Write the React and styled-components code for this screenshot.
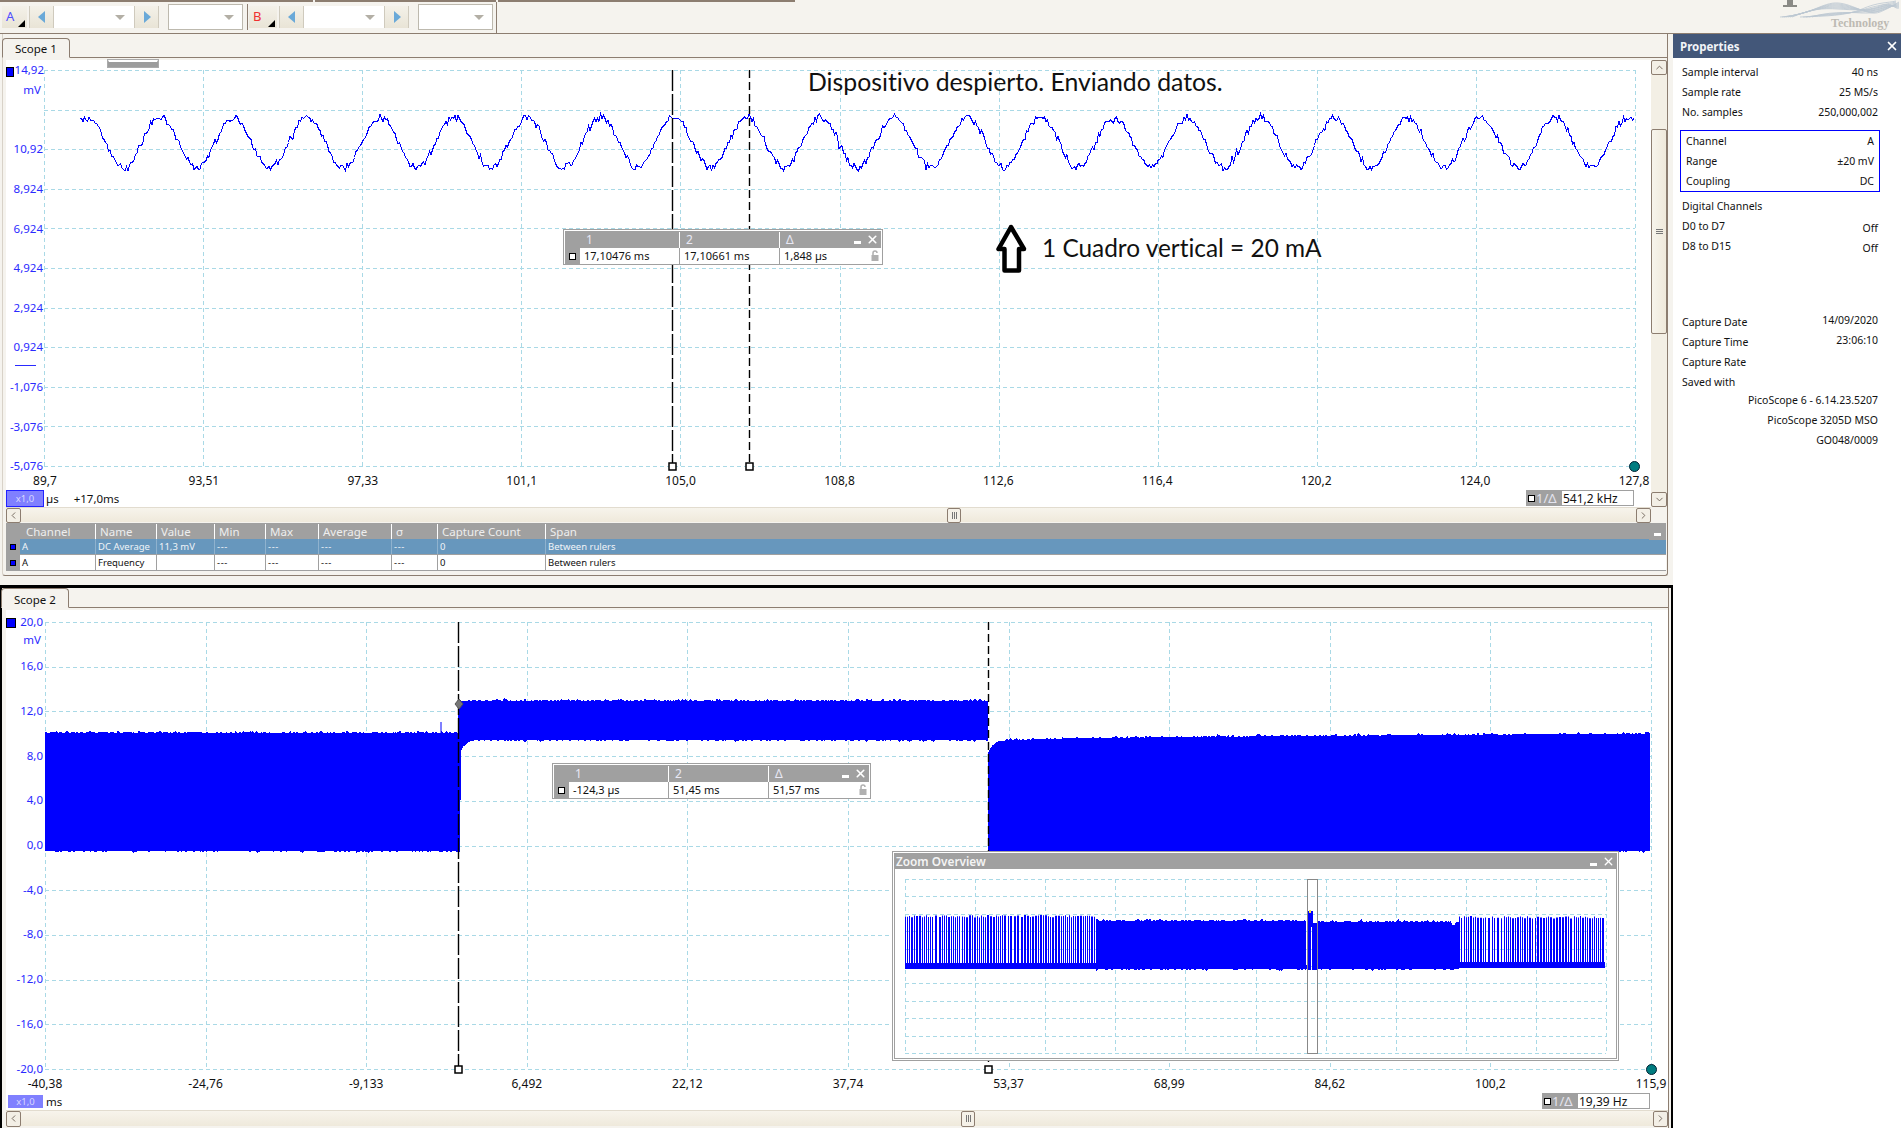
import React from "react";
import styled, { createGlobalStyle } from "styled-components";
import { ChevronUp, ChevronDown, ChevronLeft, ChevronRight, X } from "lucide-react";

const GlobalStyle = createGlobalStyle`
  html, body {
    margin: 0;
    padding: 0;
    background: #f5f3ee;
  }
  * {
    box-sizing: border-box;
  }
`;

const UI_FONT = `"Noto Sans", "Open Sans", sans-serif`;
const BROWN = "#8c7d70";
const GRID = "#a9d9e6";
const BLUE = "#0000ff";

const Page = styled.div`
  position: relative;
  width: 1901px;
  height: 1128px;
  overflow: hidden;
  font-family: ${UI_FONT};
  color: #111;
  background: #f5f3ee;
`;

/* ---------- toolbar ---------- */
const TopStrip = styled.div`
  display: flex;
  gap: 2px;
  height: 2px;
`;
const TopSegment = styled.div`
  width: ${(p) => p.$w}px;
  height: 2px;
  background: ${BROWN};
`;
const Toolbar = styled.div`
  display: flex;
  height: 32px;
  border-bottom: 1px solid ${BROWN};
`;
const ToolGroup = styled.div`
  display: flex;
  align-items: center;
  width: 497px;
  height: 31px;
  padding: 1px 0 2px 2px;
  border-right: 1px solid ${BROWN};
`;
const ChannelButton = styled.div`
  position: relative;
  width: ${(p) => p.$w}px;
  height: 22px;
  padding-left: 4px;
  font-size: 13px;
  line-height: 20px;
  color: ${(p) => p.$color};
  background: linear-gradient(#f4f1e9, #e9e4d6);
`;
const Corner = styled.span`
  position: absolute;
  right: 2px;
  bottom: 1px;
  width: 0;
  height: 0;
  border-left: 7px solid transparent;
  border-bottom: 7px solid #000;
`;
const StepButton = styled.div`
  display: flex;
  align-items: center;
  justify-content: center;
  width: 25px;
  height: 22px;
  margin-left: ${(p) => p.$ml || 0}px;
  background: linear-gradient(#f4f1e9, #e9e4d6);
  border-left: 1px solid #cfcabd;
  border-right: 1px solid #cfcabd;
`;
const Field = styled.div`
  display: flex;
  align-items: center;
  justify-content: flex-end;
  width: 80px;
  height: 22px;
  padding-right: 9px;
  background: #fff;
`;
const SelectBox = styled.div`
  display: flex;
  align-items: center;
  justify-content: flex-end;
  width: 75px;
  height: 26px;
  margin-left: 9px;
  padding-right: 8px;
  background: #fff;
  border: 1px solid #bdb9ae;
`;
const DropArrow = styled.span`
  width: 0;
  height: 0;
  border-left: 5px solid transparent;
  border-right: 5px solid transparent;
  border-top: 5px solid #b3afa5;
`;
const ToolDivider = styled.div`
  width: 1px;
  height: 26px;
  margin: 0 1px 0 4px;
  background: ${BROWN};
`;
const LogoMark = styled.svg`
  position: absolute;
  top: 0;
  right: 0;
`;
const LogoText = styled.text`
  font-family: "Liberation Serif", serif;
  font-weight: 700;
  font-size: 12px;
  fill: #bdbab3;
`;

/* ---------- main columns ---------- */
const Columns = styled.div`
  display: flex;
  height: 1094px;
`;
const LeftColumn = styled.div`
  width: 1673px;
`;

const ScopePane = styled.div`
  width: 1666px;
  height: 542px;
  margin-left: 2px;
  border-right: 1px solid ${BROWN};
  border-bottom: 1px solid ${BROWN};
  border-left: 1px solid #d8d2c8;
  border-radius: 0 0 3px 3px;
`;
const SecondFrame = styled.div`
  height: 543px;
  margin-top: 9px;
  border-top: 3px solid #000;
  border-left: 2px solid #000;
  border-right: 2px solid #000;
`;
const SecondPane = styled.div`
  width: 1667px;
  height: 540px;
  border-right: 1px solid ${BROWN};
`;
const TabStrip = styled.div`
  display: flex;
  align-items: flex-end;
  height: ${(p) => p.$h}px;
  margin-left: -1px;
  border-bottom: 1px solid ${BROWN};
`;
const Tab = styled.div`
  width: 68px;
  height: 20px;
  margin-bottom: -1px;
  padding-left: 12px;
  font-size: 11.5px;
  line-height: ${(p) => p.$lh}px;
  background: #f5f3ee;
  border: 1px solid ${BROWN};
  border-bottom: 1px solid #f5f3ee;
  border-radius: 4px 4px 0 0;
`;
const PlotRow = styled.div`
  display: flex;
  padding: 2px 0 0 ${(p) => p.$pl}px;
`;
const PlotColumn = styled.div`
  width: ${(p) => p.$w}px;
  background: #fff;
`;
const Plot = styled.div`
  position: relative;
  width: ${(p) => p.$w}px;
  height: ${(p) => p.$h}px;
  background: #fff;
`;
const Chart = styled.svg`
  display: block;
`;
const YLabel = styled.text`
  font-family: ${UI_FONT};
  font-size: 11.5px;
  fill: #2a2aff;
  text-anchor: end;
  dominant-baseline: central;
`;
const XLabel = styled.text`
  font-family: ${UI_FONT};
  font-size: 12px;
  fill: #111;
  text-anchor: middle;
  dominant-baseline: central;
`;
const GridLine = styled.path`
  stroke: ${GRID};
  stroke-width: 1;
  stroke-dasharray: 4 3;
  shape-rendering: crispEdges;
  fill: none;
`;
const Note = styled.div`
  position: absolute;
  left: ${(p) => p.$left}px;
  top: ${(p) => p.$top}px;
  font-family: "Lato", "Open Sans", sans-serif;
  font-size: ${(p) => p.$size}px;
  font-variant-ligatures: none;
  line-height: 30px;
  white-space: nowrap;
  color: #111;
`;
const DragHandle = styled.div`
  position: absolute;
  left: 102px;
  top: 0;
  width: 50px;
  height: 7px;
  background: #9c9c9c;
  border: 1px solid #9c9c9c;
  border-top: 2px solid #fff;
  outline: 1px solid #aaa;
`;

/* ---------- floating ruler legend ---------- */
const RulerBox = styled.div`
  position: absolute;
  left: ${(p) => p.$left}px;
  top: ${(p) => p.$top}px;
  width: ${(p) => p.$w}px;
  padding: 1px;
  background: #fff;
  border: 1px solid #a0a0a0;
`;
const RulerHead = styled.div`
  display: grid;
  grid-template-columns: ${(p) => p.$cols};
  height: 17px;
  background: #a0a0a0;
  color: #e8e8f4;
  font-size: 12px;
  line-height: 17px;
`;
const RulerHeadCell = styled.div`
  position: relative;
  padding-left: ${(p) => p.$pad ?? 6}px;
  border-left: ${(p) => (p.$first ? "none" : "1px solid #fff")};
  margin: 1px 0;
  line-height: 16px;
`;
const RulerRow = styled.div`
  display: grid;
  grid-template-columns: ${(p) => p.$cols};
  height: 15px;
  background: #fff;
  font-size: 11px;
  line-height: 16px;
`;
const RulerCell = styled.div`
  position: relative;
  padding-left: 4px;
  white-space: nowrap;
  border-left: ${(p) => (p.$first ? "none" : "1px solid #a0a0a0")};
`;
const RulerSide = styled.div`
  display: flex;
  align-items: center;
  justify-content: center;
  background: #a0a0a0;
`;
const SmallSquare = styled.span`
  flex: none;
  width: 7px;
  height: 7px;
  background: #fff;
  border: 1px solid #000;
`;
const WindowButtons = styled.div`
  position: absolute;
  right: ${(p) => p.$right ?? 2}px;
  top: ${(p) => p.$top ?? 0}px;
  display: flex;
  align-items: center;
  gap: 5px;
  height: 14px;
`;
const MinBar = styled.span`
  width: 7px;
  height: 3px;
  margin-top: 7px;
  background: #fff;
`;
const LockIcon = styled.svg`
  position: absolute;
  right: 2px;
  top: 2px;
`;

/* ---------- readout under a plot ---------- */
const Readout = styled.div`
  display: flex;
  align-items: center;
  justify-content: space-between;
  height: 18px;
  padding: 0 ${(p) => p.$pr}px 0 ${(p) => p.$pl}px;
  background: #fff;
`;
const ReadoutLeft = styled.div`
  display: flex;
  align-items: center;
  font-size: 11.5px;
`;
const ScaleChip = styled.div`
  width: ${(p) => p.$w}px;
  height: ${(p) => p.$h}px;
  text-align: center;
  font-size: 9.5px;
  line-height: ${(p) => p.$h - (p.$framed ? 2 : 0)}px;
  color: #d8d8ff;
  background: #8080ff;
  border: ${(p) => (p.$framed ? "1px solid #2222ff" : "none")};
`;
const Unit = styled.span`
  margin-left: ${(p) => p.$ml}px;
`;
const Freq = styled.div`
  display: flex;
  width: 108px;
  height: 16px;
`;
const FreqTag = styled.div`
  display: flex;
  align-items: center;
  gap: 1px;
  width: 35px;
  padding-left: 2px;
  font-size: 13px;
  color: #e4e4ee;
  background: #a0a0a0;
`;
const FreqValue = styled.div`
  flex: 1;
  padding-left: 1px;
  font-size: 12px;
  line-height: 15px;
  background: #fff;
  border: 1px solid #a0a0a0;
`;

/* ---------- scroll bars ---------- */
const VBar = styled.div`
  display: flex;
  flex-direction: column;
  width: 16px;
  height: 447px;
  background: #f3efe5;
`;
const HBar = styled.div`
  display: flex;
  align-items: center;
  width: ${(p) => p.$w}px;
  height: ${(p) => p.$h}px;
  margin-left: ${(p) => p.$ml}px;
  background: linear-gradient(#f7f4ec, #efe9db);
  border-top: 1px solid #e2dccf;
`;
const ScrollButton = styled.div`
  flex: none;
  display: flex;
  align-items: center;
  justify-content: center;
  width: ${(p) => p.$w || 16}px;
  height: ${(p) => p.$h || 15}px;
  color: #6f6358;
  background: #f3efe6;
  border: 1px solid ${BROWN};
  border-radius: 2px;
`;
const VSpacer = styled.div`
  flex: ${(p) => (p.$h ? `0 0 ${p.$h}px` : 1)};
`;
const VThumb = styled.div`
  display: flex;
  align-items: center;
  justify-content: center;
  flex: 0 0 205px;
  background: linear-gradient(90deg, #f7f4ec, #efe9db);
  border: 1px solid ${BROWN};
  border-radius: 2px;
`;
const Grip = styled.span`
  width: 7px;
  height: 5px;
  border-top: 1px solid #777;
  border-bottom: 1px solid #777;
  background: linear-gradient(#777, #777) center / 100% 1px no-repeat;
`;
const HThumb = styled.div`
  display: flex;
  align-items: center;
  justify-content: center;
  flex: none;
  width: 14px;
  height: ${(p) => p.$h}px;
  margin-left: ${(p) => p.$ml}px;
  margin-right: auto;
  background: #f5f1e8;
  border: 1px solid ${BROWN};
  border-radius: 2px;
`;
const HGrip = styled.span`
  width: 5px;
  height: 7px;
  border-left: 1px solid #777;
  border-right: 1px solid #777;
  background: linear-gradient(#777, #777) center / 1px 100% no-repeat;
`;

/* ---------- measurements table ---------- */
const TABLE_COLS = "14px 75px 61px 58px 51px 53px 73px 46px 108px 1fr";
const Table = styled.div`
  position: relative;
  width: 1660px;
  margin: 1px 0 0 3px;
  padding-bottom: 1px;
  background: #a0a0a0;
`;
const TableHead = styled.div`
  display: grid;
  grid-template-columns: ${TABLE_COLS};
  height: 16px;
  color: #eeeeee;
  font-size: 11.5px;
  line-height: 15px;
`;
const HeadCell = styled.div`
  padding-left: ${(p) => p.$pad ?? 4}px;
  border-left: ${(p) => (p.$bare ? "none" : "1px solid #fff")};
  margin: 1px 0;
`;
const TableRow = styled.div`
  display: grid;
  grid-template-columns: ${TABLE_COLS};
  height: 15px;
  margin-bottom: ${(p) => (p.$selected ? 1 : 0)}px;
  font-size: 9.5px;
  line-height: 15px;
  color: ${(p) => (p.$selected ? "#f0f4f8" : "#111")};
  background: ${(p) => (p.$selected ? "#6797bd" : "#fff")};
`;
const SwatchCell = styled.div`
  display: flex;
  align-items: center;
  justify-content: center;
  background: #a0a0a0;
`;
const Swatch = styled.span`
  width: 6px;
  height: 6px;
  background: ${BLUE};
  border: 1px solid #000;
`;
const RowCell = styled.div`
  padding-left: 2px;
  white-space: nowrap;
  letter-spacing: ${(p) => (p.$dashes ? "0.6px" : "0")};
  border-left: ${(p) => (p.$bare ? "none" : `1px solid ${p.$selected ? "#8fb2ce" : "#a0a0a0"}`)};
`;
const TableMin = styled.div`
  position: absolute;
  right: 0;
  top: 0;
  display: flex;
  align-items: center;
  justify-content: center;
  width: 17px;
  height: 17px;
  padding-top: 6px;
  background: #a0a0a0;
`;
const TableMinBar = styled.span`
  width: 7px;
  height: 3px;
  background: #fff;
`;

/* ---------- zoom overview ---------- */
const Overview = styled.div`
  position: absolute;
  left: 886px;
  top: 241px;
  width: 727px;
  height: 210px;
  padding: 1px;
  background: #fff;
  border: 1px solid #a0a0a0;
`;
const OverviewInner = styled.div`
  position: relative;
  height: 100%;
  background: #fff;
  border: 1px solid #a0a0a0;
`;
const OverviewHead = styled.div`
  height: 15px;
  padding-left: 1px;
  font-size: 11.8px;
  font-weight: 600;
  line-height: 14px;
  color: #f4f4f4;
  background: #a0a0a0;
`;

/* ---------- properties panel ---------- */
const Properties = styled.aside`
  width: 228px;
  background: #fff;
`;
const PropHead = styled.div`
  display: flex;
  align-items: center;
  justify-content: space-between;
  height: 24px;
  padding: 0 2px 0 7px;
  font-size: 11.5px;
  font-weight: 700;
  color: #f2f4f8;
  background: #435779;
`;
const PropBody = styled.div`
  padding: 4px 23px 0 9px;
  font-size: 10.5px;
`;
const PropRow = styled.div`
  display: flex;
  align-items: center;
  justify-content: ${(p) => (p.$right ? "flex-end" : "space-between")};
  height: 20px;
  margin-top: ${(p) => p.$mt || 0}px;
  white-space: nowrap;
`;
const PropValue = styled.span`
  padding-top: ${(p) => (p.$low ? 4 : 0)}px;
  padding-bottom: ${(p) => (p.$high ? 4 : 0)}px;
`;
const ChannelBox = styled.div`
  margin: 8px -2px 0 -2px;
  padding: 0 5px;
  border: 1px solid ${BLUE};
`;

/* ---------- data ---------- */
const makeRandom = (seed) => {
  let s = seed;
  return () => {
    s = (s * 16807) % 2147483647;
    return (s - 1) / 2147483646;
  };
};

const rippleTrace = () => {
  const rand = makeRandom(77);
  let d = "";
  for (let x = 80; x <= 1634; x += 1.5) {
    const phase = (2 * Math.PI * (x - 160)) / 73.4;
    const spike = rand() > 0.95 ? (rand() - 0.5) * 10 : 0;
    const noise = (rand() - 0.5) * 6.5 + spike;
    const y = Math.round((142.5 - 25 * Math.cos(phase) + noise) / 1.5) * 1.5;
    d += `${d ? "L" : "M"}${x} ${y}`;
  }
  return d;
};

const noisyBand = (x0, x1, topAt, bottomAt, seed) => {
  const rand = makeRandom(seed);
  const top = [];
  const bottom = [];
  for (let x = x0; x <= x1; x += 1) {
    const upper = rand() > 0.75 ? rand() * 3 : rand() * 0.8;
    const lower = rand() > 0.8 ? rand() * 2.5 : rand() * 0.6;
    top.push(`${x} ${(topAt(x) - upper).toFixed(1)}`);
    bottom.unshift(`${x} ${(bottomAt(x) + lower).toFixed(1)}`);
  }
  return `M${top.join("L")}L${bottom.join("L")}Z`;
};

const combBars = (x0, x1, top, bottom, seed) => {
  const rand = makeRandom(seed);
  let d = "";
  let x = x0;
  while (x < x1) {
    const w = rand() > 0.6 ? 2 : 1;
    const t = top + rand() * 2.5;
    d += `M${x} ${t}H${x + w}V${bottom}H${x}Z`;
    x += w + (rand() > 0.85 ? 2 : 1);
  }
  return d;
};

const scopeOneX = ["89,7", "93,51", "97,33", "101,1", "105,0", "108,8", "112,6", "116,4", "120,2", "124,0", "127,8"];
const scopeOneY = [
  ["14,92", 69],
  ["10,92", 148],
  ["8,924", 188],
  ["6,924", 228],
  ["4,924", 267],
  ["2,924", 307],
  ["0,924", 346],
  ["-1,076", 386],
  ["-3,076", 426],
  ["-5,076", 465],
];
const scopeTwoX = ["-40,38", "-24,76", "-9,133", "6,492", "22,12", "37,74", "53,37", "68,99", "84,62", "100,2", "115,9"];
const scopeTwoY = ["20,0", "16,0", "12,0", "8,0", "4,0", "0,0", "-4,0", "-8,0", "-12,0", "-16,0", "-20,0"];

const range = (n) => Array.from({ length: n }, (_, i) => i);

const gridPath = (x0, x1, y0, y1, nx, ny) => {
  let d = "";
  range(nx + 1).forEach((i) => {
    const x = Math.round(x0 + ((x1 - x0) * i) / nx) + 0.5;
    d += `M${x} ${y0}V${y1}`;
  });
  range(ny + 1).forEach((i) => {
    const y = Math.round(y0 + ((y1 - y0) * i) / ny) + 0.5;
    d += `M${x0} ${y}H${x1}`;
  });
  return d;
};

const measurements = [
  { name: "DC Average", value: "11,3 mV", selected: true },
  { name: "Frequency", value: "", selected: false },
];

const Triangle = ({ dir }) => (
  <svg width="8" height="12" viewBox="0 0 8 12">
    <path d={dir === "left" ? "M7 0V12L0 6Z" : "M1 0V12L8 6Z"} fill="#6aa9d8" />
  </svg>
);

const RulerLegend = ({ left, top, w, cols, values }) => (
  <RulerBox $left={left} $top={top} $w={w}>
    <RulerHead $cols={cols}>
      <RulerHeadCell $first $pad={0} />
      <RulerHeadCell $first>1</RulerHeadCell>
      <RulerHeadCell>2</RulerHeadCell>
      <RulerHeadCell>Δ</RulerHeadCell>
    </RulerHead>
    <RulerRow $cols={cols}>
      <RulerSide>
        <SmallSquare />
      </RulerSide>
      <RulerCell $first>{values[0]}</RulerCell>
      <RulerCell>{values[1]}</RulerCell>
      <RulerCell>
        {values[2]}
        <LockIcon width="8" height="11" viewBox="0 0 8 11">
          <path d="M2 5V3a2 2 0 0 1 4 0" fill="none" stroke="#b0b0b0" strokeWidth="1.5" />
          <rect x="0.5" y="5" width="7" height="6" fill="#b0b0b0" />
        </LockIcon>
      </RulerCell>
    </RulerRow>
    <WindowButtons $top={2} $right={3}>
      <MinBar />
      <X size={13} color="#fff" strokeWidth={3} />
    </WindowButtons>
  </RulerBox>
);

const HScroll = ({ w, h, ml, thumbAt, leftW }) => (
  <HBar $w={w} $h={h} $ml={ml}>
    <ScrollButton $w={leftW} $h={h}>
      <ChevronLeft size={11} strokeWidth={2} />
    </ScrollButton>
    <HThumb $h={h} $ml={thumbAt}>
      <HGrip />
    </HThumb>
    <ScrollButton $w={leftW} $h={h}>
      <ChevronRight size={11} strokeWidth={2} />
    </ScrollButton>
  </HBar>
);

const FreqBox = ({ value }) => (
  <Freq>
    <FreqTag>
      <SmallSquare />
      1/Δ
    </FreqTag>
    <FreqValue>{value}</FreqValue>
  </Freq>
);

function ScopeOnePlot() {
  return (
    <Plot $w={1645} $h={429}>
      <Chart width="1645" height="429" viewBox="6 60 1645 429">
        <GridLine d={gridPath(44, 1635, 70, 466, 10, 10)} />
        <rect x="6.5" y="67.5" width="7" height="9" fill={BLUE} stroke="#000" />
        {scopeOneY.map(([t, y], i) => (
          <YLabel key={t} x={i === 0 ? 44 : 43} y={y}>
            {t}
          </YLabel>
        ))}
        <YLabel x="41" y="89">
          mV
        </YLabel>
        {scopeOneX.map((t, i) => (
          <XLabel key={t} x={45 + 158.9 * i} y="480">
            {t}
          </XLabel>
        ))}
        <path d="M15 365.5H36" stroke="#2a2aff" />
        <path d={rippleTrace()} fill="none" stroke={BLUE} strokeWidth="1" shapeRendering="crispEdges" />
        <path d="M672.5 70V466" stroke="#000" strokeWidth="1.4" strokeDasharray="21 3" />
        <path d="M749.5 70V466" stroke="#000" strokeWidth="1.4" strokeDasharray="8 4" />
        <rect x="669" y="463" width="7" height="7" fill="#fff" stroke="#000" strokeWidth="1.5" />
        <rect x="746" y="463" width="7" height="7" fill="#fff" stroke="#000" strokeWidth="1.5" />
        <circle cx="1634.5" cy="466.5" r="5" fill="#007c80" stroke="#023" strokeWidth="1" />
        {/* hand drawn arrow from the annotation */}
        <path
          d="M1011 227L998.5 249H1004.5V270.5H1019V249H1024Z"
          fill="#fff"
          stroke="#000"
          strokeWidth="4.5"
          strokeLinejoin="round"
        />
      </Chart>
      <DragHandle />
      <Note $left={802} $top={7} $size={24.8}>
        Dispositivo despierto. Enviando datos.
      </Note>
      <Note $left={1036} $top={173} $size={24.4}>
        1 Cuadro vertical = 20 mA
      </Note>
      <RulerLegend
        left={557}
        top={169}
        w={320}
        cols="15px 99px 100px 1fr"
        values={["17,10476 ms", "17,10661 ms", "1,848 µs"]}
      />
    </Plot>
  );
}

function ScopeTwoPlot() {
  return (
    <Plot $w={1662} $h={482}>
      <Chart width="1662" height="482" viewBox="6 610 1662 482">
        <GridLine d={gridPath(45, 1651, 622, 1069, 10, 10)} />
        <rect x="6.5" y="618.5" width="9" height="9" fill={BLUE} stroke="#000" />
        {scopeTwoY.map((t, i) => (
          <YLabel key={t} x="43" y={621 + 44.7 * i}>
            {t}
          </YLabel>
        ))}
        <YLabel x="41" y="639">
          mV
        </YLabel>
        {scopeTwoX.map((t, i) => (
          <XLabel key={t} x={45 + 160.6 * i} y="1083">
            {t}
          </XLabel>
        ))}
        <path
          d={noisyBand(45, 458, () => 733, () => 851, 11)}
          fill={BLUE}
          shapeRendering="crispEdges"
        />
        <path d="M441 733V722" stroke={BLUE} />
        <path
          d={noisyBand(
            458,
            988,
            () => 701,
            (x) => (x < 461 ? 851 : x < 478 ? 740 + ((478 - x) / 17) ** 3 * 10 : 740),
            23
          )}
          fill={BLUE}
          shapeRendering="crispEdges"
        />
        <path
          d={noisyBand(
            988,
            1650,
            (x) => (x < 1006 ? 741 + ((1006 - x) / 18) ** 3 * 12 : 741 - Math.sqrt((x - 1006) / 644) * 7),
            () => 851,
            37
          )}
          fill={BLUE}
          shapeRendering="crispEdges"
        />
        <path d="M458.5 622V1069" stroke="#000" strokeWidth="1.4" strokeDasharray="21 3" />
        <path d="M988.5 622V1069" stroke="#000" strokeWidth="1.4" strokeDasharray="8 4" />
        <path d="M459 699L463 704L459 709L455 704Z" fill="#777" stroke="#555" />
        <rect x="455" y="1066" width="7" height="7" fill="#fff" stroke="#000" strokeWidth="1.5" />
        <rect x="985" y="1066" width="7" height="7" fill="#fff" stroke="#000" strokeWidth="1.5" />
        <circle cx="1651.5" cy="1069.5" r="5" fill="#007c80" stroke="#023" strokeWidth="1" />
      </Chart>
      <RulerLegend
        left={546}
        top={153}
        w={319}
        cols="15px 99px 100px 1fr"
        values={["-124,3 µs", "51,45 ms", "51,57 ms"]}
      />
      <Overview>
        <OverviewInner>
          <OverviewHead>Zoom Overview</OverviewHead>
          <WindowButtons $top={0} $right={1}>
            <MinBar />
            <X size={13} color="#fff" strokeWidth={2.5} />
          </WindowButtons>
          <Chart width="721" height="189" viewBox="895 869 721 189">
            <GridLine d={gridPath(905, 1606, 879, 1053, 10, 10)} />
            <path d={combBars(905, 1096, 915, 969, 5)} fill={BLUE} />
            <rect x="905" y="963" width="191" height="6" fill={BLUE} />
            <path d={noisyBand(1096, 1306, () => 921, () => 969, 41)} fill={BLUE} shapeRendering="crispEdges" />
            <path d="M1308 911H1313V927H1311V970H1308Z" fill={BLUE} />
            <rect x="1306" y="965" width="2" height="4" fill={BLUE} />
            <rect x="1312" y="923" width="6" height="47" fill={BLUE} />
            <rect x="1309" y="910" width="2" height="3" fill="#f4e542" />
            <path
              d={noisyBand(1318, 1459, (x) => (x > 1451 && x < 1456 ? 925 : 922), () => 969, 43)}
              fill={BLUE}
              shapeRendering="crispEdges"
            />
            <path d={combBars(1459, 1605, 916, 968, 9)} fill={BLUE} />
            <rect x="1459" y="962" width="146" height="6" fill={BLUE} />
            <rect x="1307.5" y="879.5" width="10" height="174" fill="none" stroke="#888" strokeWidth="1" />
          </Chart>
        </OverviewInner>
      </Overview>
    </Plot>
  );
}

function App() {
  return (
    <Page>
      <GlobalStyle />
      <TopStrip>
        <TopSegment $w={313} />
        <TopSegment $w={181} />
        <TopSegment $w={297} />
      </TopStrip>
      <Toolbar>
        <ToolGroup>
          <ChannelButton $w={25} $color="#5050ff">
            A
            <Corner />
          </ChannelButton>
          <StepButton $ml={2}>
            <Triangle dir="left" />
          </StepButton>
          <Field>
            <DropArrow />
          </Field>
          <StepButton>
            <Triangle dir="right" />
          </StepButton>
          <SelectBox>
            <DropArrow />
          </SelectBox>
          <ToolDivider />
          <ChannelButton $w={28} $color="#f03030">
            B
            <Corner />
          </ChannelButton>
          <StepButton $ml={2}>
            <Triangle dir="left" />
          </StepButton>
          <Field>
            <DropArrow />
          </Field>
          <StepButton>
            <Triangle dir="right" />
          </StepButton>
          <SelectBox>
            <DropArrow />
          </SelectBox>
        </ToolGroup>
      </Toolbar>
      <LogoMark width="130" height="32" viewBox="1771 0 130 32">
        <path d="M1787 0H1793V5H1797V7H1783V5H1787Z" fill="#8a8a86" />
        <g fill="none" stroke="#bcc8d2" strokeWidth="0.8">
          {range(7).map((i) => (
            <path
              key={i}
              d={`M${1780 + i * 2} 17C1812 ${15 - i} 1822 ${2 + i} 1838 ${3 + i}S1868 ${17 - i} 1880 ${12 - i}S1895 ${4 + i} 1899 ${2 + i}`}
            />
          ))}
          {range(5).map((i) => (
            <path key={`b${i}`} d={`M${1800 + i * 3} 17C1826 ${16 - i} 1846 ${16 - i} 1862 ${9 + i}S1888 ${3 + i} 1896 ${1 + i}`} />
          ))}
        </g>
        <LogoText x="1831" y="27">
          Technology
        </LogoText>
      </LogoMark>
      <Columns>
        <LeftColumn>
          <ScopePane>
            <TabStrip $h={24}>
              <Tab $lh={19}>Scope 1</Tab>
            </TabStrip>
            <PlotRow $pl={3}>
              <PlotColumn $w={1645}>
                <ScopeOnePlot />
                <Readout $pl={0} $pr={17}>
                  <ReadoutLeft>
                    <ScaleChip $w={38} $h={17} $framed>
                      x1,0
                    </ScaleChip>
                    <Unit $ml={2}>µs</Unit>
                    <Unit $ml={15}>+17,0ms</Unit>
                  </ReadoutLeft>
                  <FreqBox value="541,2 kHz" />
                </Readout>
              </PlotColumn>
              <VBar>
                <ScrollButton>
                  <ChevronUp size={11} strokeWidth={2} />
                </ScrollButton>
                <VSpacer $h={54} />
                <VThumb>
                  <Grip />
                </VThumb>
                <VSpacer />
                <ScrollButton>
                  <ChevronDown size={11} strokeWidth={2} />
                </ScrollButton>
              </VBar>
            </PlotRow>
            <HScroll w={1645} h={15} ml={3} thumbAt={926} leftW={15} />
            <Table>
              <TableHead>
                <HeadCell $bare $pad={0} />
                <HeadCell $bare $pad={6}>
                  Channel
                </HeadCell>
                <HeadCell>Name</HeadCell>
                <HeadCell>Value</HeadCell>
                <HeadCell>Min</HeadCell>
                <HeadCell>Max</HeadCell>
                <HeadCell>Average</HeadCell>
                <HeadCell>σ</HeadCell>
                <HeadCell>Capture Count</HeadCell>
                <HeadCell>Span</HeadCell>
              </TableHead>
              {measurements.map((m) => (
                <TableRow key={m.name} $selected={m.selected}>
                  <SwatchCell>
                    <Swatch />
                  </SwatchCell>
                  <RowCell $bare>A</RowCell>
                  <RowCell $selected={m.selected}>{m.name}</RowCell>
                  <RowCell $selected={m.selected}>{m.value}</RowCell>
                  <RowCell $selected={m.selected} $dashes>---</RowCell>
                  <RowCell $selected={m.selected} $dashes>---</RowCell>
                  <RowCell $selected={m.selected} $dashes>---</RowCell>
                  <RowCell $selected={m.selected} $dashes>---</RowCell>
                  <RowCell $selected={m.selected}>0</RowCell>
                  <RowCell $selected={m.selected}>Between rulers</RowCell>
                </TableRow>
              ))}
              <TableMin>
                <TableMinBar />
              </TableMin>
            </Table>
          </ScopePane>
          <SecondFrame>
            <SecondPane>
              <TabStrip $h={20}>
                <Tab $lh={21}>Scope 2</Tab>
              </TabStrip>
              <PlotRow $pl={4}>
                <PlotColumn $w={1662}>
                  <ScopeTwoPlot />
                  <Readout $pl={2} $pr={18}>
                    <ReadoutLeft>
                      <ScaleChip $w={35} $h={13}>
                        x1,0
                      </ScaleChip>
                      <Unit $ml={3}>ms</Unit>
                    </ReadoutLeft>
                    <FreqBox value="19,39 Hz" />
                  </Readout>
                </PlotColumn>
              </PlotRow>
              <HScroll w={1662} h={16} ml={4} thumbAt={940} leftW={15} />
            </SecondPane>
          </SecondFrame>
        </LeftColumn>
        <Properties>
          <PropHead>
            Properties
            <X size={14} color="#fff" strokeWidth={3} />
          </PropHead>
          <PropBody>
            <PropRow>
              <span>Sample interval</span>
              <span>40 ns</span>
            </PropRow>
            <PropRow>
              <span>Sample rate</span>
              <span>25 MS/s</span>
            </PropRow>
            <PropRow>
              <span>No. samples</span>
              <span>250,000,002</span>
            </PropRow>
            <ChannelBox>
              <PropRow>
                <span>Channel</span>
                <span>A</span>
              </PropRow>
              <PropRow>
                <span>Range</span>
                <span>±20 mV</span>
              </PropRow>
              <PropRow>
                <span>Coupling</span>
                <span>DC</span>
              </PropRow>
            </ChannelBox>
            <PropRow $mt={4}>
              <span>Digital Channels</span>
            </PropRow>
            <PropRow>
              <span>D0 to D7</span>
              <PropValue $low>Off</PropValue>
            </PropRow>
            <PropRow>
              <span>D8 to D15</span>
              <PropValue $low>Off</PropValue>
            </PropRow>
            <PropRow $mt={56}>
              <span>Capture Date</span>
              <PropValue $high>14/09/2020</PropValue>
            </PropRow>
            <PropRow>
              <span>Capture Time</span>
              <PropValue $high>23:06:10</PropValue>
            </PropRow>
            <PropRow>
              <span>Capture Rate</span>
            </PropRow>
            <PropRow>
              <span>Saved with</span>
            </PropRow>
            <PropRow $right $mt={-2}>
              PicoScope 6 - 6.14.23.5207
            </PropRow>
            <PropRow $right>PicoScope 3205D MSO</PropRow>
            <PropRow $right>GO048/0009</PropRow>
          </PropBody>
        </Properties>
      </Columns>
    </Page>
  );
}

export default App;
